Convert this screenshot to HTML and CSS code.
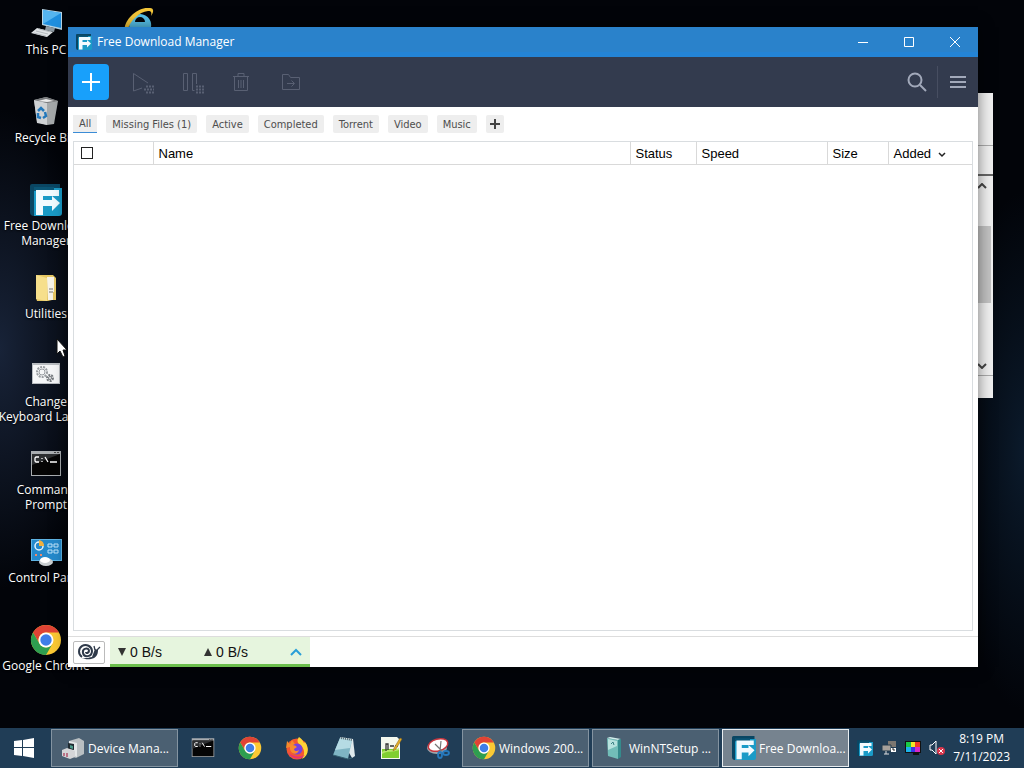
FILE: index.html
```html
<!DOCTYPE html>
<html lang="en">
<head>
    <meta charset="UTF-8">
    <meta name="viewport" content="width=device-width, initial-scale=1.0">
    <title>Free Download Manager</title>
    <link rel="stylesheet" href="styles.css">
</head>
<body>
    <!-- Icons that are used more than once -->
    <svg class="sprite" aria-hidden="true">
        <symbol id="icon-fdm" viewBox="0 0 32 32">
            <path d="M2 0h28v4H6v28H4a4 4 0 0 1-4-4V2a2 2 0 0 1 2-2z" fill="#0a4663"/>
            <path d="M4 4h28v25a3 3 0 0 1-3 3H4z" fill="#1a9bc7"/>
            <path d="M4 3h20v4H4z" fill="#0b5575"/>
            <path d="M6 6h23v6H13v4h9v-4l8 7-8 8v-5h-9v9H6z" fill="#f2fbff"/>
        </symbol>
        <symbol id="icon-chrome" viewBox="0 0 32 32">
            <circle cx="16" cy="16" r="15" fill="#fbc934"/>
            <path d="M3 8.500A15 15 0 0 1 29 8.500H16a7.500 7.500 0 0 0-6.500 11.300z" fill="#e04335"/>
            <path d="M3 8.500A15 15 0 0 0 16 31l6.500-11.300a7.500 7.500 0 0 1-13 0z" fill="#2e9e50"/>
            <circle cx="16" cy="16" r="7.500" fill="#fff"/>
            <circle cx="16" cy="16" r="5.700" fill="#3f7ee8"/>
        </symbol>
        <symbol id="icon-cmd" viewBox="0 0 32 32">
            <path d="M1 3h30v25H1z" fill="#a9adb0"/>
            <path d="M2 6h28v21H2z" fill="#050505"/>
            <path d="M2 6h28L2 17z" fill="#2d2f31"/>
            <path d="M24 4h2v1h-2zM27 4h2v1h-2z" fill="#444"/>
            <path d="M9 9H6l-1 1v3l1 1h3M12 10v1M12 13v1M15 9l3 5M20 14h7" fill="none" stroke="#fff" stroke-width="1.300"/>
        </symbol>
    </svg>

    <main class="desktop">
        <ul class="shortcuts">
            <li class="shortcut">
                <svg class="shortcut-icon" viewBox="0 0 32 32">
                    <path d="M12 1l20 3v18l-20-5z" fill="#b9d6e6"/>
                    <path d="M13 2l18 3v15l-18-4z" fill="#1f8fdf"/>
                    <path d="M13 2l18 3-18 11z" fill="#55b5f0"/>
                    <path d="M16 18l9 2-1 4-9-2z" fill="#8d9aa3"/>
                    <path d="M7 20l16 4-6 5-16-4z" fill="#dfe3e6"/>
                    <path d="M6 23l12 3M9 21l12 3M4 25l12 3" stroke="#b4babf" fill="none"/>
                </svg>
                <span>This PC</span>
            </li>
            <li class="shortcut">
                <svg class="shortcut-icon" viewBox="0 0 32 32">
                    <path d="M4 4l12-3 12 4-4 23-7 1-10-3z" fill="#a5a9ab"/>
                    <path d="M4 4l13 3v22l-10-2z" fill="#cfd2d4"/>
                    <path d="M4 4l12-3 12 4-11 2z" fill="#77797b"/>
                    <path d="M8 5l8-2 8 2-7 1z" fill="#ececec"/>
                    <path d="M8 15l3-3 3 3M15 16l1 4-3 2M11 22l-3-1v-4" fill="none" stroke="#2378bb" stroke-width="2.500"/>
                </svg>
                <span>Recycle Bin</span>
            </li>
            <li class="shortcut">
                <svg class="shortcut-icon"><use href="#icon-fdm"/></svg>
                <span>Free Download<br>Manager</span>
            </li>
            <li class="shortcut">
                <svg class="shortcut-icon" viewBox="0 0 32 32">
                    <path d="M6 3h17l3 3v21l-8 2H7l-1-3z" fill="#e6c763"/>
                    <path d="M17 5h7v23h-6z" fill="#f7f4e8"/>
                    <path d="M20 16v5M22 16v5" stroke="#777" stroke-dasharray="2 1" fill="none"/>
                    <path d="M6 3l11 3v23L6 27z" fill="#f6df8b"/>
                    <path d="M23 20h3v8h-3z" fill="#e6c763"/>
                </svg>
                <span>Utilities</span>
            </li>
            <li class="shortcut">
                <svg class="shortcut-icon" viewBox="0 0 32 32">
                    <path d="M2 3h28v21H2z" fill="#b8bcc0"/>
                    <path d="M3 5h26v18H3z" fill="#f5f6f7"/>
                    <circle cx="12" cy="12" r="5" fill="none" stroke="#999da1" stroke-width="2" stroke-dasharray="2 1"/>
                    <circle cx="12" cy="12" r="3" fill="none" stroke="#999da1"/>
                    <circle cx="20" cy="18" r="3" fill="none" stroke="#777b7f" stroke-width="2" stroke-dasharray="2 1"/>
                    <circle cx="20" cy="18" r="1.500" fill="none" stroke="#777b7f"/>
                </svg>
                <span>Change<br>Keyboard Layout</span>
            </li>
            <li class="shortcut">
                <svg class="shortcut-icon"><use href="#icon-cmd"/></svg>
                <span>Command<br>Prompt</span>
            </li>
            <li class="shortcut">
                <svg class="shortcut-icon" viewBox="0 0 32 32">
                    <path d="M1 3h31v22H1z" fill="#5fb4e4"/>
                    <path d="M2 4h29v20H2z" fill="#2489cb"/>
                    <circle cx="9" cy="10" r="4" fill="none" stroke="#e6f5ff" stroke-width="1.500"/>
                    <path d="M9 10V4a6 6 0 0 1 5 6z" fill="#f0b03f"/>
                    <path d="M18 8h4v3h-4zM24 8h4v3h-4zM18 14h4v3h-4zM24 14h4v3h-4z" fill="none" stroke="#bfe4fa"/>
                    <path d="M5 19h2M10 19h2" stroke="#f08a6a" stroke-width="2"/>
                    <ellipse cx="16" cy="26" rx="7" ry="4" fill="#c9ced1"/>
                    <ellipse cx="15" cy="24" rx="5" ry="3" fill="#fff"/>
                </svg>
                <span>Control Panel</span>
            </li>
            <li class="shortcut">
                <svg class="shortcut-icon"><use href="#icon-chrome"/></svg>
                <span>Google Chrome</span>
            </li>
            <li class="shortcut">
                <svg class="shortcut-icon" role="img" aria-label="Internet Explorer" viewBox="0 0 32 32">
                    <path d="M26 19H11a6 6 0 0 0 11 3h4a11 11 0 1 1 1-3zM11 14h10a5 5 0 0 0-10 0z" fill="#55c1ea"/>
                    <path d="M1 22C-1 13 14-2 26 0c4 0 4 4 1 8 1-4 0-5-3-5C15 4 6 13 4 21z" fill="#f3c63a"/>
                </svg>
            </li>
        </ul>

        <div class="back-window">
            <div class="back-head"></div>
            <div class="back-line"></div>
            <div class="back-scroll">
                <svg class="back-arrow" viewBox="0 0 10 6"><path d="M1 5l4-4 4 4" /></svg>
                <div class="back-thumb"></div>
                <svg class="back-arrow" viewBox="0 0 10 6"><path d="M1 1l4 4 4-4" /></svg>
            </div>
            <div class="back-foot"></div>
        </div>

        <section class="window">
            <header class="titlebar">
                <svg class="title-icon"><use href="#icon-fdm"/></svg>
                <h1>Free Download Manager</h1>
                <button class="win-btn" aria-label="Minimize">
                    <svg viewBox="0 0 12 12"><path d="M1 6.500h10"/></svg>
                </button>
                <button class="win-btn" aria-label="Maximize">
                    <svg viewBox="0 0 12 12"><path d="M1.500 1.500h9v9h-9z"/></svg>
                </button>
                <button class="win-btn" aria-label="Close">
                    <svg viewBox="0 0 12 12"><path d="M1 1l10 10M11 1L1 11"/></svg>
                </button>
            </header>

            <div class="toolbar">
                <button class="tool add" aria-label="Add download">
                    <svg viewBox="0 0 24 24"><path d="M12 3v18M3 12h18"/></svg>
                </button>
                <button class="tool" aria-label="Start" disabled>
                    <svg viewBox="0 0 24 24">
                        <path d="M13 18l-8.500 3V3.500L19 13"/>
                        <path class="dots" d="M17 16.500h8M15 19.500h10M17 22.500h8"/>
                    </svg>
                </button>
                <button class="tool" aria-label="Pause" disabled>
                    <svg viewBox="0 0 24 24">
                        <path d="M4.500 3.500h4v17h-4zM17.500 14V3.500h-4v17h2"/>
                        <path class="dots" d="M17 16.500h8M17 19.500h8M17 22.500h8"/>
                    </svg>
                </button>
                <button class="tool" aria-label="Delete" disabled>
                    <svg viewBox="0 0 24 24"><path d="M4 6.500h16M9 6V3.500h6V6M5.500 7v13.500h13V7M9.500 10v8M12 10v8M14.500 10v8"/></svg>
                </button>
                <button class="tool" aria-label="Move to" disabled>
                    <svg viewBox="0 0 24 24"><path d="M3.500 4.500h6l2 3h9v12h-17zM8 13.500h7M12.500 10.500l3 3-3 3"/></svg>
                </button>
                <button class="tool light search" aria-label="Search">
                    <svg viewBox="0 0 24 24"><circle cx="10" cy="10" r="6.500"/><path d="M15 15l6 6"/></svg>
                </button>
                <span class="divider"></span>
                <button class="tool light" aria-label="Menu">
                    <svg viewBox="0 0 24 24"><path d="M4 7h16M4 12h16M4 17h16"/></svg>
                </button>
            </div>

            <nav class="filters">
                <button class="filter active">All</button>
                <button class="filter">Missing Files (1)</button>
                <button class="filter">Active</button>
                <button class="filter">Completed</button>
                <button class="filter">Torrent</button>
                <button class="filter">Video</button>
                <button class="filter">Music</button>
                <button class="filter plus" aria-label="Add tag">
                    <svg viewBox="0 0 10 10"><path d="M5 0v10M0 5h10"/></svg>
                </button>
            </nav>

            <div class="list">
                <table>
                    <thead>
                        <tr>
                            <th class="col-check"><input type="checkbox" aria-label="Select all"></th>
                            <th>Name</th>
                            <th class="col-status">Status</th>
                            <th class="col-speed">Speed</th>
                            <th class="col-size">Size</th>
                            <th class="col-added">Added <svg class="sort" viewBox="0 0 8 6"><path d="M1 1l3 3 3-3"/></svg></th>
                        </tr>
                    </thead>
                </table>
            </div>

            <footer class="statusbar">
                <button class="snail" aria-label="Snail mode">
                    <svg viewBox="0 0 24 18">
                        <path class="snail-body" d="M3 16c4-1 6 1 11 0 5-1 7-4 7-9l-3-1-3 8z"/>
                        <circle cx="9" cy="8" r="7" fill="#fff" stroke="none"/>
                        <path d="M5 14a6.500 6.500 0 1 1 10-6c0 6-8 7-9 2-1-5 6-6 6-2 0 2-3 3-3 1"/>
                        <path d="M18 7l-1-4M20 7l3-3" stroke-width="1.300"/>
                    </svg>
                </button>
                <div class="speeds">
                    <span class="speed"><svg viewBox="0 0 8 8"><path d="M0 0h8L4 8z"/></svg>0 B/s</span>
                    <span class="speed"><svg viewBox="0 0 8 8"><path d="M0 8h8L4 0z"/></svg>0 B/s</span>
                    <button class="expand" aria-label="Show speed limits">
                        <svg viewBox="0 0 12 8"><path d="M1 7l5-5 5 5"/></svg>
                    </button>
                </div>
            </footer>
        </section>

        <svg class="cursor" viewBox="0 0 12 20">
            <path d="M1 1v15l3-3 3 6 2-1-2-6h4z" fill="#fff" stroke="#111"/>
        </svg>
    </main>

    <footer class="taskbar">
        <button class="start" aria-label="Start menu">
            <svg viewBox="0 0 22 22"><path d="M1 4l8-1v7H1zM10 3l11-2v9H10zM1 11h8v8l-8-1zM10 11h11v10l-11-2z" fill="#fff"/></svg>
        </button>
        <button class="task">
            <svg viewBox="0 0 24 24">
                <path d="M8 5l10-3 5 3v13l-8 4-7-3z" fill="#b9bfc2"/>
                <path d="M8 5l8 2v14l-8-3z" fill="#e5e8e9"/>
                <path d="M7 7l6 1v6l-6-1z" fill="#1f2a30"/>
                <path d="M9 9l3 1v3l-3-1z" fill="#4b9a8a"/>
                <path d="M1 14l5-2 8 3v6l-5 2-8-3z" fill="#d5d6d8"/>
                <path d="M3 17v3M6 17v4" stroke="#b0526b" stroke-width="1.500"/>
            </svg>
            <span>Device Mana...</span>
        </button>
        <div class="pinned">
            <button class="pin" aria-label="Command Prompt"><svg><use href="#icon-cmd"/></svg></button>
            <button class="pin" aria-label="Google Chrome"><svg><use href="#icon-chrome"/></svg></button>
            <button class="pin" aria-label="Firefox">
                <svg viewBox="0 0 24 24">
                    <circle cx="12" cy="13" r="10.500" fill="#f4582f"/>
                    <path d="M1 12l1-7 3 3 2-4 3 4 3 1z" fill="#f58a2a"/>
                    <path d="M14 1c3 2 4 4 5 6l1-1c5 7 3 14-3 17 4-6 2-12-3-15-2-2-2-4 0-7z" fill="#ffd335"/>
                    <circle cx="12" cy="13" r="5.500" fill="#7542e0"/>
                    <path d="M5 9c3 0 5 0 7 2l-3 2c0 2 3 3 5 1-1 5-8 5-9-1z" fill="#f98b2c"/>
                    <path d="M3 16c3 7 12 9 17 3-4 2-12 3-17-3z" fill="#e3327c"/>
                </svg>
            </button>
            <button class="pin" aria-label="Notepad">
                <svg viewBox="0 0 24 24">
                    <path d="M8 1l13 2 2 17-3 2z" fill="#dfe9ec"/>
                    <path d="M8 2l12 2-4 19-15-4z" fill="#7fb5c4"/>
                    <path d="M8 2l12 2-2 8L3 14z" fill="#b5dbe4"/>
                    <path d="M9 2l11 2" stroke="#5a6b72" stroke-width="2" stroke-dasharray="1 1"/>
                    <path d="M1 19l15 4 4-1" fill="none" stroke="#356272"/>
                </svg>
            </button>
            <button class="pin" aria-label="Notepad++">
                <svg viewBox="0 0 24 24">
                    <path d="M2 1h16l3 3v19H2z" fill="#f5f8ee"/>
                    <path d="M3 13h17v9H3z" fill="#80ce31"/>
                    <path d="M3 16c6-4 10 0 17-4v2c-6 3-10 0-17 4z" fill="#b7e76b"/>
                    <path d="M7 15V8h2v6M11 10h4M16 10h3" fill="none" stroke="#333" stroke-width="1.300"/>
                    <path d="M15 12l6-10 2 1-6 10-3 2z" fill="#e3ad27" stroke="#84601d" stroke-width=".5"/>
                </svg>
            </button>
            <button class="pin" aria-label="Snipping Tool">
                <svg viewBox="0 0 24 24">
                    <ellipse cx="11" cy="12" rx="10" ry="6" fill="#9fa5aa"/>
                    <ellipse cx="12" cy="9" rx="10" ry="6" transform="rotate(-15 12 9)" fill="#fff" stroke="#c9363e" stroke-width="1.500"/>
                    <path d="M9 8l7 7M15 5l-1 10" fill="none" stroke="#777" stroke-width="1.200"/>
                    <ellipse cx="14" cy="19" rx="2" ry="3" fill="none" stroke="#2679bd" stroke-width="1.800"/>
                    <ellipse cx="20" cy="17" rx="3" ry="2" fill="none" stroke="#2679bd" stroke-width="1.800"/>
                </svg>
            </button>
        </div>
        <button class="task">
            <svg><use href="#icon-chrome"/></svg>
            <span>Windows 200...</span>
        </button>
        <button class="task">
            <svg viewBox="0 0 24 24">
                <path d="M5 2l11 2v19L6 20z" fill="#72bdb8"/>
                <path d="M5 2l3-1 11 2-3 1z" fill="#d2efec"/>
                <path d="M16 4l3-1v18l-3 2z" fill="#358b8c"/>
                <path d="M6 3l9 2v5l-9 4z" fill="#b7e2de"/>
                <path d="M9 8l2-2 1 3" fill="none" stroke="#3b8083"/>
            </svg>
            <span>WinNTSetup ...</span>
        </button>
        <button class="task current">
            <svg><use href="#icon-fdm"/></svg>
            <span>Free Downloa...</span>
        </button>
        <div class="tray">
            <svg><use href="#icon-fdm"/></svg>
            <svg viewBox="0 0 16 16">
                <path d="M7 1h8v6H7z" fill="#7c7771"/>
                <path d="M1 5h9v6H1z" fill="#a6a19b" stroke="#233b4d"/>
                <path d="M5 11v3M3 14h5" stroke="#ddd"/>
                <path d="M10 8h5v4h-5z" fill="#fff"/>
                <path d="M12 8v2h2" stroke="#222" fill="none"/>
            </svg>
            <svg viewBox="0 0 16 16">
                <path d="M0 1h16v12H0z" fill="#111"/>
                <path d="M1 2h5v5H1z" fill="#19c947"/>
                <path d="M6 2h4v5H6z" fill="#f4e627"/>
                <path d="M10 2h5v5h-5z" fill="#f23b25"/>
                <path d="M1 7h5v5H1z" fill="#1cb3eb"/>
                <path d="M6 7h4v5H6z" fill="#3737e8"/>
                <path d="M10 7h5v5h-5z" fill="#d727c8"/>
                <path d="M8 13h6v2H8z" fill="#111"/>
            </svg>
            <svg viewBox="0 0 16 16">
                <path d="M1 5h2l4-4v13l-4-4H1z" fill="none" stroke="#fff"/>
                <circle cx="12" cy="11" r="4" fill="#d9364c"/>
                <path d="M10 9l4 4M14 9l-4 4" stroke="#fff"/>
            </svg>
            <time class="clock" datetime="2023-07-11T20:19">8:19 PM<br>7/11/2023</time>
        </div>
    </footer>
</body>
</html>
```
FILE: styles.css
```css
* {
    box-sizing: border-box;
}
body {
    margin: 0;
    height: 100vh;
    display: flex;
    flex-direction: column;
    overflow: hidden;
    font-family: "Open Sans", "Noto Sans", sans-serif;
    font-size: 12px;
    background: #020409;
}
button {
    font: inherit;
    color: inherit;
    border: none;
    background: none;
    padding: 0;
}
svg {
    display: block;
    flex: none;
}
.sprite {
    position: absolute;
    width: 0;
    height: 0;
}

/* Desktop */
.desktop {
    position: relative;
    flex: 1;
    min-height: 0;
    background:
        radial-gradient(ellipse 100px 240px at 0 48%, #182338, transparent),
        radial-gradient(ellipse 70px 260px at 100% 62%, #0b1a2b, transparent),
        #020409;
}
.shortcuts {
    list-style: none;
    margin: 0;
    padding: 8px 0 0;
    display: grid;
    grid-auto-flow: column;
    grid-template-rows: repeat(8, 88px);
    grid-auto-columns: 92px;
    column-gap: 2px;
}
.shortcut {
    display: flex;
    flex-direction: column;
    align-items: center;
    gap: 2px;
    color: #fff;
    line-height: 15px;
    text-align: center;
    text-shadow: 0 1px 2px #000;
    white-space: nowrap;
}
.shortcut-icon {
    width: 32px;
    height: 32px;
}
.cursor {
    position: absolute;
    left: 56px;
    top: 338px;
    width: 12px;
    height: 20px;
}

/* Window behind */
.back-window {
    position: absolute;
    top: 93px;
    right: 31px;
    width: 200px;
    height: 305px;
    display: flex;
    flex-direction: column;
    background: #f0f0f0;
}
.back-head {
    height: 53px;
    border-bottom: 1px solid #aaa;
}
.back-line {
    height: 30px;
    border-bottom: 2px solid #666;
}
.back-scroll {
    flex: 1;
    display: flex;
    flex-direction: column;
    align-items: flex-end;
    justify-content: space-between;
    padding: 7px 2px 6px;
    border-bottom: 1px solid #aaa;
}
.back-arrow {
    width: 10px;
    height: 6px;
    margin-right: 4px;
    fill: none;
    stroke: #444;
    stroke-width: 2;
}
.back-thumb {
    width: 17px;
    height: 77px;
    margin-bottom: 24px;
    background: #c2c2c2;
}
.back-foot {
    height: 22px;
}

/* Main window */
.window {
    position: absolute;
    top: 27px;
    right: 46px;
    bottom: 61px;
    left: 68px;
    display: flex;
    flex-direction: column;
    background: #fff;
    box-shadow: 0 0 14px rgba(0,0,0,0.5);
}
.titlebar {
    display: flex;
    align-items: center;
    height: 30px;
    padding-left: 8px;
    background: #2a82cb;
    border-bottom: 5px solid #2484d6;
    color: #fff;
}
.title-icon {
    width: 16px;
    height: 16px;
}
h1 {
    flex: 1;
    margin: 0 0 0 5px;
    font-size: 12px;
    font-weight: normal;
}
.titlebar > * {
    margin-top: 4px;
}
.win-btn {
    width: 46px;
    display: flex;
    justify-content: center;
}
.win-btn svg {
    width: 12px;
    height: 12px;
    fill: none;
    stroke: #fff;
}
.toolbar {
    display: flex;
    align-items: center;
    gap: 14px;
    height: 50px;
    padding: 0 2px 0 5px;
    background: #333b4e;
}
.tool {
    width: 36px;
    height: 36px;
    display: flex;
    align-items: center;
    justify-content: center;
}
.tool svg {
    width: 24px;
    height: 24px;
    fill: none;
    stroke: #596073;
    overflow: visible;
}
.tool .dots {
    stroke-width: 2;
    stroke-dasharray: 2 1;
}
.tool.add {
    background: #18a0fb;
    border-radius: 4px;
}
.tool.add svg {
    stroke: #fff;
    stroke-width: 2;
}
.tool.light svg {
    stroke: #a2a9ba;
    stroke-width: 2;
}
.search {
    margin-left: auto;
}
.divider {
    width: 1px;
    height: 32px;
    margin: 0 -12px;
    background: #474e61;
}
.filters {
    display: flex;
    gap: 9px;
    padding: 8px 5px;
    font-family: "DejaVu Sans Condensed", "Liberation Sans", sans-serif;
    font-size: 11px;
    color: #4d4d4d;
}
.filter {
    height: 18px;
    padding: 0 6px;
    background: #eee;
    border-radius: 2px;
    white-space: nowrap;
}
.filter.active {
    border-bottom: 1px solid #3b8cd6;
    border-radius: 0;
}
.filter.plus {
    padding: 0 4px;
}
.plus svg {
    width: 10px;
    height: 10px;
    stroke: #444;
    stroke-width: 2;
}

/* Download list */
.list {
    flex: 1;
    margin: 0 5px 5px;
    border: 1px solid #d9dde0;
    font-family: "Liberation Sans", Arial, sans-serif;
    font-size: 13px;
}
table {
    width: 100%;
    table-layout: fixed;
    border-collapse: collapse;
}
th {
    height: 22px;
    padding: 1px 5px 0;
    border-bottom: 1px solid #d9d9d9;
    border-left: 1px solid #d9d9d9;
    font-weight: normal;
    text-align: left;
}
th:first-child {
    border-left: none;
    padding-left: 7px;
}
.col-check {
    width: 79px;
}
.col-status {
    width: 66px;
}
.col-speed {
    width: 131px;
}
.col-size {
    width: 61px;
}
.col-added {
    width: 84px;
}
input[type="checkbox"] {
    appearance: none;
    display: block;
    width: 12px;
    height: 12px;
    margin: 0;
    border: 1px solid #222;
    background: #fff;
}
.sort {
    display: inline-block;
    width: 8px;
    height: 6px;
    margin-left: 3px;
    fill: none;
    stroke: #222;
    stroke-width: 1.5;
}

/* Status bar */
.statusbar {
    display: flex;
    align-items: center;
    gap: 5px;
    height: 31px;
    padding-left: 5px;
    border-top: 1px solid #ddd;
    font-family: "Liberation Sans", Arial, sans-serif;
    font-size: 14px;
    color: #111;
}
.snail {
    width: 32px;
    height: 23px;
    display: flex;
    align-items: center;
    justify-content: center;
    border: 1px solid #bbb;
    border-radius: 2px;
}
.snail svg {
    width: 24px;
    height: 18px;
    fill: none;
    stroke: #2f3a4a;
    stroke-width: 2;
}
.snail .snail-body {
    fill: #2f3a4a;
    stroke: none;
}
.speeds {
    width: 200px;
    height: 30px;
    display: flex;
    align-items: center;
    padding: 2px 8px 0;
    background: #e6f5de;
    border-bottom: 3px solid #6cbf4d;
}
.speed {
    width: 87px;
    display: flex;
    align-items: center;
    gap: 4px;
}
.speed svg {
    width: 8px;
    height: 8px;
    fill: #333;
}
.expand {
    margin-left: auto;
}
.expand svg {
    width: 12px;
    height: 8px;
    fill: none;
    stroke: #2a9fd8;
    stroke-width: 2;
}

/* Taskbar */
.taskbar {
    display: flex;
    align-items: stretch;
    gap: 3px;
    height: 40px;
    padding: 1px 0;
    background: #203d56;
    color: #fff;
}
.start {
    width: 48px;
    display: flex;
    align-items: center;
    padding-left: 13px;
}
.start svg {
    width: 22px;
    height: 22px;
}
.task {
    width: 127px;
    display: flex;
    align-items: center;
    gap: 3px;
    padding-left: 9px;
    background: #4b6072;
    border: 1px solid #8494a1;
    white-space: nowrap;
}
.task svg {
    width: 24px;
    height: 24px;
}
.task.current {
    background: #76838f;
    border-color: #e8edf0;
}
.pinned {
    display: flex;
    gap: 4px;
}
.pin {
    width: 43px;
    display: flex;
    align-items: center;
    justify-content: center;
}
.pin svg {
    width: 24px;
    height: 24px;
}
.tray {
    display: flex;
    align-items: center;
    gap: 8px;
    margin-left: auto;
    padding-right: 14px;
}
.tray svg {
    width: 16px;
    height: 16px;
}
.clock {
    line-height: 18px;
    text-align: center;
}
```
